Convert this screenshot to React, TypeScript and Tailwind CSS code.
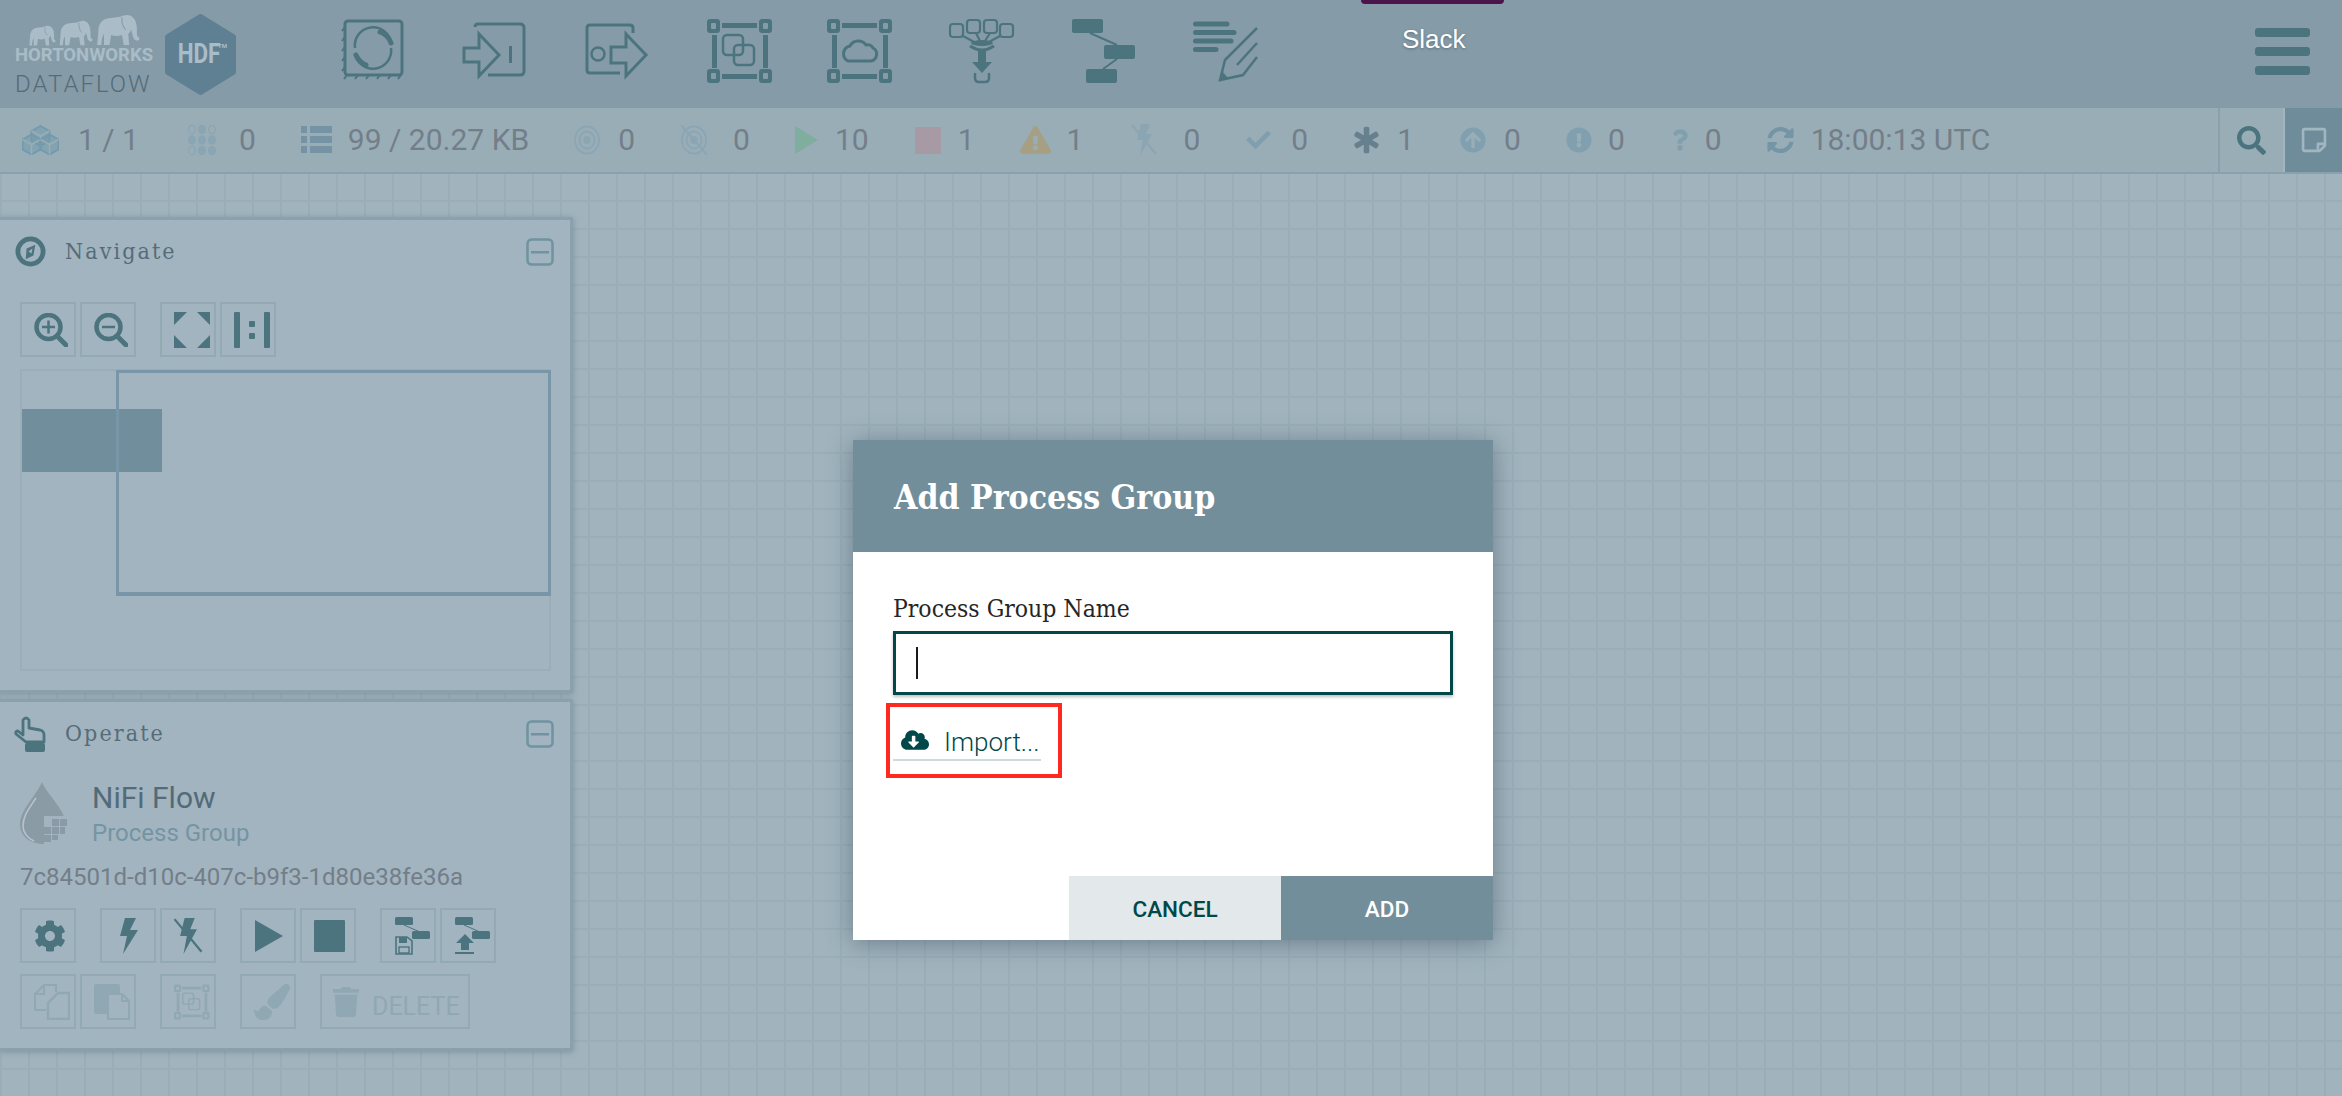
import React from "react";
import {
  FaCog, FaCheck, FaAsterisk, FaArrowCircleUp, FaExclamationCircle, FaQuestion, FaSyncAlt,
  FaExclamationTriangle, FaSearch, FaRegStickyNote, FaCloudDownloadAlt, FaPaintBrush, FaTrash,
} from "react-icons/fa";

const T = "#4c747f";
const HB = "#859ca8";

function Frame({ inner, vb = "0 0 66 64", color = T, hole = HB, cls = "w-[66px] h-[64px] overflow-visible" }: { inner: React.ReactNode; vb?: string; color?: string; hole?: string; cls?: string }) {
  const corner = (x: number, y: number, hx: number, hy: number, key: string) => (
    <g key={key}>
      <rect x={x} y={y} width="13" height="14" rx="3" fill={color} />
      <rect x={hx} y={hy} width="5" height="6" rx="1" fill={hole} />
    </g>
  );
  return (
    <svg viewBox={vb} className={cls}>
      {corner(0, 0, 4, 4, "a")}
      {corner(52, 0, 56, 4, "b")}
      {corner(0, 50, 4, 54, "c")}
      {corner(52, 50, 56, 54, "d")}
      <rect x="15" y="4" width="35" height="5" fill={color} />
      <rect x="15" y="55" width="35" height="5" fill={color} />
      <rect x="5" y="16" width="5" height="33" fill={color} />
      <rect x="56" y="16" width="5" height="33" fill={color} />
      {inner}
    </svg>
  );
}

const PgInner = ({ color = T }: { color?: string }) => (
  <g fill="none" stroke={color} strokeWidth="2.5">
    <rect x="16" y="16" width="20" height="20" rx="4" />
    <rect x="27" y="26" width="20" height="20" rx="4" />
  </g>
);

function HeaderIcons() {
  const s = "w-[64px] h-[64px] overflow-visible";
  return (
    <div className="flex gap-[58px] ml-[105px] pt-[19px]">
      <svg viewBox="0 0 64 64" className={s}>
        <rect x="4" y="2" width="57" height="54" rx="3" fill="none" stroke={T} strokeWidth="3" />
        <g stroke={T} strokeWidth="2" fill="none">
          {[8, 18, 28, 38, 48].map((y) => <path key={y} d={`M4 ${y}l-3 4`} />)}
          {[6, 17, 28, 39, 50, 60].map((x) => <path key={x} d={`M${x} 56l-3 4`} />)}
        </g>
        <path d="M14 29A18 18 0 0 1 50 24" fill="none" stroke={T} strokeWidth="2.5" />
        <path d="M50 29A18 18 0 0 1 14 34" fill="none" stroke={T} strokeWidth="2.5" />
        <path d="M39 13A18 18 0 0 1 50 24" fill="none" stroke={T} strokeWidth="5" strokeLinecap="round" />
        <path d="M25 46A18 18 0 0 1 15 36" fill="none" stroke={T} strokeWidth="5" strokeLinecap="round" />
      </svg>
      <svg viewBox="0 0 64 64" className={s}>
        <path d="M12 8Q12 5 15 5H57Q61 5 61 9V52Q61 56 57 56H25" fill="none" stroke={T} strokeWidth="3" />
        <path d="M1 29H16V15L36 36L16 57V43H1Z" fill={HB} stroke={T} strokeWidth="3" />
        <rect x="46" y="27" width="3" height="17" fill={T} />
      </svg>
      <svg viewBox="0 0 64 64" className={s}>
        <path d="M48 14V9Q48 6 45 6H5Q2 6 2 9V51Q2 54 5 54H35" fill="none" stroke={T} strokeWidth="3" />
        <circle cx="13" cy="35" r="6.5" fill="none" stroke={T} strokeWidth="2.5" />
        <path d="M26 28H41V15L61 36L41 57V44H26Z" fill={HB} stroke={T} strokeWidth="3" />
      </svg>
      <Frame vb="0 0 64 64" cls={s} inner={<PgInner />} />
      <Frame vb="2 0 64 64" cls={s} inner={
        <path d="M21 42H44A7 7 0 0 0 46 29A6 6 0 0 0 39 26A9.5 9.5 0 0 0 23 27A8 8 0 0 0 21 42Z" fill="none" stroke={T} strokeWidth="3" strokeLinejoin="round" />
      } />
      <svg viewBox="2 0 64 64" className={s}>
        <g fill="none" stroke={T} strokeWidth="2.2">
          <rect x="1" y="5" width="13" height="13" rx="3" />
          <rect x="18" y="1" width="13" height="13" rx="3" />
          <rect x="35" y="1" width="13" height="13" rx="3" />
          <rect x="51" y="5" width="13" height="13" rx="3" />
          <path d="M14 17L27 24M27 14L31 22M41 14L36 22M51 17L38 24" />
          <path d="M21 27Q33 35 45 27" strokeWidth="3" />
          <path d="M26 54V59Q26 63 30 63H36Q40 63 40 59V54" strokeWidth="2.5" />
        </g>
        <ellipse cx="33" cy="24" rx="11" ry="3" fill={T} />
        <rect x="29" y="30" width="8" height="14" fill={T} />
        <path d="M23 43H43L33 54Z" fill={T} />
      </svg>
      <svg viewBox="1 0 64 64" className={s}>
        <rect x="0" y="0" width="31" height="14" rx="2" fill={T} />
        <rect x="32" y="26" width="31" height="14" rx="2" fill={T} />
        <rect x="14" y="50" width="31" height="14" rx="2" fill={T} />
        <path d="M18 14L45 26M45 40L31 50" stroke={T} strokeWidth="2" />
      </svg>
      <svg viewBox="2 0 64 64" className={s}>
        <g stroke={T} strokeWidth="5" strokeLinecap="round">
          <path d="M2.5 5H34M2.5 13.5H41M2.5 22H38M2.5 30.5H23" />
        </g>
        <path d="M64 9L32 41L27 61L50 56L64 38M64 24L44 46" fill="none" stroke={T} strokeWidth="2.5" />
        <path d="M27 61L29 52L35 59Z" fill={T} />
      </svg>
    </div>
  );
}

function Elephant({ cls, fill = "#a9bcc7", ear = "#859ca8" }: { cls: string; fill?: string; ear?: string }) {
  return (
    <svg viewBox="0 0 100 70" preserveAspectRatio="none" className={cls}>
      <path d="M5 68L8 30Q12 8 40 8Q55 7 62 4Q78 -2 88 12Q94 22 93 40Q93 52 99 52Q99 59 92 58Q84 56 83 44L80 34Q78 42 74 44L76 68H64L60 46Q48 50 36 46L32 68H20L20 44Q15 50 14 68Z" fill={fill} />
      <path d="M60 8Q58 24 68 34" fill="none" stroke={ear} strokeWidth="2.5" />
    </svg>
  );
}

function Logo() {
  return (
    <div className="flex pl-[15px] pt-[14px] w-[236px] shrink-0">
      <div className="w-[135px] flex flex-col">
        <div className="flex items-end h-[32px] pl-[13px] gap-[2px]">
          <Elephant cls="w-[28px] h-[21px]" />
          <Elephant cls="w-[35px] h-[26px]" />
          <Elephant cls="w-[45px] h-[32px]" />
        </div>
        <div className="mt-[1px] h-[16px] leading-[16px] text-[18.5px] font-bold text-[#a9bcc7] font-['Roboto',sans-serif] whitespace-nowrap">HORTONWORKS</div>
        <div className="mt-[9px] h-[24px] leading-[24px] text-[24px] font-light text-[#566b77] font-['Roboto',sans-serif] tracking-[2px] whitespace-nowrap">DATAFLOW</div>
      </div>
      <div className="relative ml-[15px] w-[71px] h-[81px] flex items-center justify-center">
        <svg viewBox="0 0 71 81" className="absolute inset-0 w-[71px] h-[81px]">
          <path d="M35.5 3L68 23V58L35.5 78L3 58V23Z" fill="#5f8093" stroke="#5f8093" strokeWidth="6" strokeLinejoin="round" />
        </svg>
        <span className="relative inline-block scale-x-[0.83] text-[27px] font-bold text-[#a9bdc9] font-['Roboto',sans-serif] pr-[4px]">HDF</span>
        <span className="absolute right-[9px] top-[29px] text-[6px] leading-none font-bold text-[#a9bdc9] font-['Roboto',sans-serif]">TM</span>
      </div>
    </div>
  );
}

function Header() {
  return (
    <header className="relative h-[108px] shrink-0 bg-[#859ca8] flex">
      <Logo />
      <HeaderIcons />
      <div className="absolute left-[1361px] top-0 w-[143px] h-[4px] rounded-b-[10px] bg-[#4a154b]" />
      <div className="absolute left-[1402px] top-[23px] text-[26px] leading-[32px] text-white font-['Liberation_Sans',sans-serif] [text-shadow:0_1px_3px_rgba(0,0,0,0.3)]">Slack</div>
      <div className="absolute left-[2255px] top-[28px] flex flex-col gap-[10px]">
        <div className="w-[55px] h-[9px] rounded-[3px] bg-[#4c747f]" />
        <div className="w-[55px] h-[9px] rounded-[3px] bg-[#4c747f]" />
        <div className="w-[55px] h-[9px] rounded-[3px] bg-[#4c747f]" />
      </div>
    </header>
  );
}

function Num({ children, cls }: { children: React.ReactNode; cls: string }) {
  return <span className={`${cls} text-[30px] leading-[64px] text-[#747e89] font-['Roboto',sans-serif] whitespace-nowrap`}>{children}</span>;
}

function Cubes() {
  const c = "#729aad";
  const cube = (x: number, y: number) => (
    <g transform={`translate(${x} ${y})`} fill="none" stroke={c} strokeWidth="2" strokeLinejoin="round">
      <path d="M9 0L18 5V15L9 20L0 15V5Z" fill={c} fillOpacity="0.55" />
      <path d="M0 5L9 10L18 5M9 10V20" stroke="#99adb7" strokeWidth="1.5" />
    </g>
  );
  return (
    <svg viewBox="0 0 37 30" className="w-[37px] h-[30px]">
      {cube(9.5, 1)}{cube(0.5, 9.5)}{cube(18.5, 9.5)}
    </svg>
  );
}

function GridDots() {
  const pts: [number, number, boolean][] = [];
  for (let r = 0; r < 3; r++) for (let c = 0; c < 3; c++) pts.push([5 + c * 10, 5.5 + r * 10.5, r === 1 || (r === 2 && c > 0) || (r === 0 && c === 1)]);
  return (
    <svg viewBox="0 0 30 32" className="w-[30px] h-[32px]">
      {pts.map(([x, y, f], i) => (
        <ellipse key={i} cx={x} cy={y} rx="3.4" ry="4.2" fill={f ? "#8aa5b3" : "none"} stroke="#8aa5b3" strokeWidth="1.2" />
      ))}
    </svg>
  );
}

function ListIc() {
  const c = "#7593a4";
  return (
    <svg viewBox="0 0 31 28" className="w-[31px] h-[28px]">
      {[0, 10, 20].map((y) => (
        <g key={y} fill={c}>
          <rect x="0" y={y} width="6" height="7" />
          <rect x="9" y={y} width="22" height="7" />
        </g>
      ))}
    </svg>
  );
}

function Target({ slash }: { slash?: boolean }) {
  const c = "#8aa6b4";
  return (
    <svg viewBox="0 0 30 30" className="w-[30px] h-[30px]">
      <g fill="none" stroke={c} strokeWidth="1.8">
        <ellipse cx="15" cy="15" rx="12" ry="13.5" />
        <ellipse cx="15" cy="15" rx="7.5" ry="8.5" />
      </g>
      <ellipse cx="15" cy="15" rx="3.5" ry="4" fill={c} />
      {slash && <path d="M2 0L28 30" stroke={c} strokeWidth="2" />}
    </svg>
  );
}

function BoltSlash({ c, cls }: { c: string; cls: string }) {
  return (
    <svg viewBox="0 0 28 32" className={cls}>
      <path d="M11 0H20L16 10H22L10 32L13 16H7Z" fill={c} />
      <path d="M2 1L26 30" stroke={c} strokeWidth="2" />
    </svg>
  );
}

function StatusBar() {
  return (
    <div className="h-[64px] shrink-0 bg-[#99adb7] flex items-center pl-[22px]">
      <Cubes /><Num cls="ml-[19px]">1 / 1</Num>
      <div className="ml-[48px] flex"><GridDots /></div><Num cls="ml-[22px]">0</Num>
      <div className="ml-[45px] flex"><ListIc /></div><Num cls="ml-[16px]">99 / 20.27 KB</Num>
      <div className="ml-[43px] flex"><Target /></div><Num cls="ml-[16px]">0</Num>
      <div className="ml-[44px] flex"><Target slash /></div><Num cls="ml-[24px]">0</Num>
      <div className="ml-[45px] w-0 h-0 border-y-[14px] border-y-transparent border-l-[23px] border-l-[#7fae9f]" /><Num cls="ml-[17px]">10</Num>
      <div className="ml-[46px] w-[26px] h-[27px] rounded-[1px] bg-[#a89aa4]" /><Num cls="ml-[17px]">1</Num>
      <FaExclamationTriangle className="ml-[45px] w-[31px] h-[28px] text-[#a79f83]" /><Num cls="ml-[16px]">1</Num>
      <div className="ml-[47px] flex"><BoltSlash c="#8ba5b3" cls="w-[28px] h-[32px]" /></div><Num cls="ml-[25px]">0</Num>
      <FaCheck className="ml-[45px] w-[27px] h-[24px] text-[#7f9fae]" /><Num cls="ml-[19px]">0</Num>
      <FaAsterisk className="ml-[46px] w-[25px] h-[28px] text-[#66808e] stroke-[#66808e] stroke-[30]" /><Num cls="ml-[18px]">1</Num>
      <FaArrowCircleUp className="ml-[46px] w-[26px] h-[28px] text-[#80a0b0]" /><Num cls="ml-[18px]">0</Num>
      <FaExclamationCircle className="ml-[45px] w-[26px] h-[28px] text-[#80a0b0]" /><Num cls="ml-[16px]">0</Num>
      <FaQuestion className="ml-[47px] w-[16px] h-[24px] text-[#80a0b0]" /><Num cls="ml-[17px]">0</Num>
      <FaSyncAlt className="ml-[45px] w-[27px] h-[28px] text-[#7495a6]" /><Num cls="ml-[17px]">18:00:13 UTC</Num>
      <div className="ml-auto h-full w-[65px] border-l-2 border-[#8aa0ae] flex items-center justify-center">
        <FaSearch className="w-[29px] h-[29px] text-[#4c747f]" />
      </div>
      <div className="h-full w-[59px] border-l-2 border-[#a2b4bf] bg-[#6f8c9a] flex items-center justify-center">
        <FaRegStickyNote className="w-[26px] h-[28px] text-[#a2b6c1]" />
      </div>
    </div>
  );
}

function Btn({ children, cls = "w-[56px]" }: { children?: React.ReactNode; cls?: string }) {
  return <div className={`${cls} h-[55px] border-2 border-[#93aab5] flex items-center justify-center shrink-0`}>{children}</div>;
}

function Collapse() {
  return (
    <svg viewBox="0 0 28 28" className="w-[28px] h-[28px]">
      <rect x="1.5" y="1.5" width="25" height="25" rx="4" fill="none" stroke="#6f93a2" strokeWidth="2.5" />
      <rect x="5" y="13" width="18" height="2.5" fill="#6f93a2" />
    </svg>
  );
}

function Mag({ plus }: { plus?: boolean }) {
  return (
    <svg viewBox="0 0 34 34" className="ml-[5px] w-[34px] h-[34px]">
      <circle cx="14.5" cy="14" r="12" fill="none" stroke={T} strokeWidth="4.5" />
      <path d="M23 23L32 32" stroke={T} strokeWidth="5" strokeLinecap="round" />
      <path d={plus ? "M8 14H21M14.5 7.5V20.5" : "M8 14H21"} stroke={T} strokeWidth="2.5" />
    </svg>
  );
}

function TemplateMini({ children }: { children: React.ReactNode }) {
  return (
    <svg viewBox="0 0 40 38" className="ml-[7px] w-[40px] h-[38px]">
      <rect x="3" y="0" width="18" height="8" rx="1.5" fill={T} />
      <rect x="20" y="14" width="18" height="8" rx="1.5" fill={T} />
      <path d="M12 8L28 15" stroke={T} strokeWidth="1" />
      {children}
    </svg>
  );
}

function Panel({ title, icon, cls, children }: { title: string; icon: React.ReactNode; cls: string; children: React.ReactNode }) {
  return (
    <section className={`${cls} w-[573px] bg-[#a2b4bf] border-y-[3px] border-r-[3px] border-[#8aa1ad] shadow-[0_1px_6px_rgba(60,80,95,0.35)] flex flex-col`}>
      <div className="h-[63px] shrink-0 flex items-center pl-[14px] pr-[16px]">
        <div className="w-[32px] h-[36px] flex items-center justify-center">{icon}</div>
        <span className="ml-[19px] text-[23px] tracking-[2.1px] text-[#566c78] font-['DejaVu_Serif_Condensed','DejaVu_Serif',serif]">{title}</span>
        <div className="ml-auto flex"><Collapse /></div>
      </div>
      {children}
    </section>
  );
}

function Navigate() {
  return (
    <Panel title="Navigate" cls="h-[476px] mt-[43px]" icon={
      <svg viewBox="0 0 32 32" className="w-[31px] h-[31px]">
        <circle cx="16" cy="16" r="13" fill="none" stroke={T} strokeWidth="5" />
        <path d="M21 9L19 20L11 24L12 13Z" fill={T} />
        <path d="M14 16L18 13L17 18Z" fill="#a2b4bf" />
      </svg>
    }>
      <div className="flex pl-[20px] mt-[19px]">
        <Btn><Mag plus /></Btn>
        <div className="ml-[4px]"><Btn><Mag /></Btn></div>
        <div className="ml-[24px]">
          <Btn>
            <svg viewBox="0 0 36 36" className="ml-[8px] w-[36px] h-[36px]">
              <path d="M0 0H13L0 13ZM23 0H36V13ZM0 23L13 36H0ZM36 23V36H23Z" fill={T} />
            </svg>
          </Btn>
        </div>
        <div className="ml-[4px]">
          <Btn>
            <svg viewBox="0 0 36 36" className="ml-[8px] w-[36px] h-[36px]">
              <rect x="0" y="0" width="6" height="36" rx="1" fill={T} />
              <rect x="30" y="0" width="6" height="36" rx="1" fill={T} />
              <rect x="15" y="9" width="6" height="6" rx="1" fill={T} />
              <rect x="15" y="21" width="6" height="6" rx="1" fill={T} />
            </svg>
          </Btn>
        </div>
      </div>
      <div className="relative ml-[20px] mt-[12px] w-[531px] h-[302px] border-2 border-[#99aeb9]">
        <div className="absolute left-0 top-[38px] w-[140px] h-[63px] bg-[#718e9c]" />
        <div className="absolute left-[94px] top-[-1px] w-[435px] h-[226px] border-[3px] border-b-4 border-[#7896a8]" />
      </div>
    </Panel>
  );
}

function Operate() {
  const D = "#8fa8b3";
  return (
    <Panel title="Operate" cls="h-[352px] mt-[6px]" icon={
      <svg viewBox="0 0 32 36" className="w-[32px] h-[36px]">
        <path d="M9 4Q12 0 15 4V12L26 14Q30 15 30 19V26H12L2 18Q1 15 4 15L9 19Z" fill="none" stroke={T} strokeWidth="2.8" strokeLinejoin="round" />
        <rect x="11" y="27" width="20" height="9" rx="2" fill={T} />
      </svg>
    }>
      <div className="flex pl-[20px] mt-[17px] h-[66px]">
        <svg viewBox="0 0 47 64" className="w-[47px] h-[64px] shrink-0">
          <path d="M22 0C28 14 46 28 46 44C46 56 36 62 24 62C12 62 0 56 0 42C0 28 16 14 22 0Z" fill="#8b9ba5" />
          <path d="M16 16C8 28 3 34 3 44C3 50 7 56 14 59" fill="none" stroke="#b6c3cb" strokeWidth="1.6" />
          <path d="M24 34H48V64H24Z" fill="#a2b4bf" />
          <g fill="#8b9ba5">
            <rect x="32" y="37" width="7" height="7" /><rect x="40" y="37" width="7" height="7" />
            <rect x="24" y="45" width="7" height="7" /><rect x="32" y="45" width="7" height="7" /><rect x="40" y="45" width="5" height="7" />
            <rect x="24" y="53" width="7" height="7" /><rect x="32" y="53" width="6" height="5" />
          </g>
        </svg>
        <div className="ml-[25px] flex flex-col">
          <span className="text-[30px] leading-[32px] text-[#536b78] font-['Roboto',sans-serif]">NiFi Flow</span>
          <span className="text-[24px] leading-[30px] mt-[4px] text-[#7594a3] font-['Roboto',sans-serif]">Process Group</span>
        </div>
      </div>
      <div className="pl-[20px] mt-[16px] text-[24px] leading-[26px] text-[#737e89] font-['Roboto',sans-serif] whitespace-nowrap">7c84501d-d10c-407c-b9f3-1d80e38fe36a</div>
      <div className="flex pl-[20px] mt-[18px]">
        <Btn><FaCog className="ml-[3px] w-[32px] h-[32px] text-[#4c747f]" /></Btn>
        <div className="ml-[24px]">
          <Btn>
            <svg viewBox="0 0 20 36" className="w-[20px] h-[36px]">
              <path d="M7 0H18L12 12H20L5 36L9 18H2Z" fill={T} />
            </svg>
          </Btn>
        </div>
        <div className="ml-[4px]"><Btn><BoltSlash c={T} cls="w-[32px] h-[36px]" /></Btn></div>
        <div className="ml-[24px]">
          <Btn><div className="ml-[2px] w-0 h-0 border-y-[16px] border-y-transparent border-l-[28px] border-l-[#4c747f]" /></Btn>
        </div>
        <div className="ml-[4px]"><Btn><div className="ml-[3px] w-[31px] h-[32px] rounded-[1px] bg-[#4c747f]" /></Btn></div>
        <div className="ml-[24px]">
          <Btn>
            <TemplateMini>
              <path d="M4 20H15L20 24V37H4Z" fill="none" stroke={T} strokeWidth="1.6" />
              <rect x="7" y="20" width="8" height="6" fill={T} />
              <rect x="7" y="30" width="10" height="6" fill="none" stroke={T} strokeWidth="1.4" />
            </TemplateMini>
          </Btn>
        </div>
        <div className="ml-[4px]">
          <Btn>
            <TemplateMini>
              <path d="M13 17L22 26H17V33H9V26H4Z" fill={T} />
              <rect x="3" y="35" width="19" height="2" fill={T} />
            </TemplateMini>
          </Btn>
        </div>
      </div>
      <div className="flex pl-[20px] mt-[11px]">
        <Btn>
          <svg viewBox="0 0 36 36" className="ml-[8px] w-[36px] h-[36px]">
            <path d="M22 8V1H10L1 10V26H12M10 1V10H1" fill="none" stroke={D} strokeWidth="2" />
            <path d="M24 9H35V35H14V19Z" fill="none" stroke={D} strokeWidth="2.4" />
          </svg>
        </Btn>
        <div className="ml-[4px]">
          <Btn>
            <svg viewBox="0 0 36 36" className="ml-[8px] w-[36px] h-[36px]">
              <rect x="0" y="0" width="26" height="30" rx="2" fill={D} />
              <path d="M14 10H28L35 17V35H14Z" fill="#a2b4bf" stroke={D} strokeWidth="2" />
              <path d="M28 10V17H35" fill="none" stroke={D} strokeWidth="2" />
            </svg>
          </Btn>
        </div>
        <div className="ml-[24px]">
          <Btn><Frame color={D} hole="#a2b4bf" vb="0 0 66 64" cls="ml-[8px] w-[36px] h-[36px]" inner={<PgInner color={D} />} /></Btn>
        </div>
        <div className="ml-[24px]"><Btn><FaPaintBrush className="ml-[8px] w-[36px] h-[36px] text-[#8fa8b3]" /></Btn></div>
        <div className="ml-[24px]">
          <Btn cls="w-[150px] justify-start">
            <FaTrash className="ml-[10px] w-[28px] h-[30px] text-[#8fa8b3]" />
            <span className="ml-[12px] mt-[10px] text-[25px] leading-[30px] text-[#8fa8b3] font-['Roboto',sans-serif]">DELETE</span>
          </Btn>
        </div>
      </div>
    </Panel>
  );
}

function Dialog() {
  return (
    <div className="absolute left-[853px] top-[266px] w-[640px] h-[500px] bg-white flex flex-col shadow-[0_3px_24px_rgba(40,60,75,0.45)]">
      <div className="h-[112px] shrink-0 bg-[#728e9b] flex items-center pl-[41px] pt-[5px]">
        <h1 className="text-[33.5px] font-bold text-white font-['DejaVu_Serif_Condensed','DejaVu_Serif',serif]">Add Process Group</h1>
      </div>
      <div className="flex-1 px-[40px] pt-[43px] flex flex-col items-start">
        <label className="text-[24.5px] leading-[28px] text-[#262626] font-['DejaVu_Serif_Condensed','DejaVu_Serif',serif]">Process Group Name</label>
        <div className="mt-[8px] w-[560px] h-[64px] border-[3px] border-[#004849] shadow-[0_2px_3px_rgba(0,0,0,0.25)] flex items-center pl-[20px]">
          <div className="w-[2px] h-[32px] bg-[#1a1a1a]" />
        </div>
        <div className="mt-[8px] -ml-[7px] w-[176px] h-[75px] border-[4px] border-[#ff2a1f] pl-[3px] pt-[14px]">
          <div className="w-[148px] h-[40px] border-b-2 border-[#cfdadd] flex items-center pl-[8px] gap-[15px]">
            <FaCloudDownloadAlt className="w-[28px] h-[24px] text-[#004849]" />
            <span className="pt-[4px] text-[26px] font-light text-[#004849] font-['Roboto',sans-serif] whitespace-nowrap">Import...</span>
          </div>
        </div>
      </div>
      <div className="h-[64px] shrink-0 flex justify-end">
        <div className="w-[212px] pt-[3px] bg-[#e3e8eb] flex items-center justify-center text-[22.5px] font-medium text-[#004849] font-['Roboto',sans-serif]">CANCEL</div>
        <div className="w-[212px] pt-[3px] bg-[#728e9b] flex items-center justify-center text-[22.5px] font-medium text-white font-['Roboto',sans-serif]">ADD</div>
      </div>
    </div>
  );
}

export default function App() {
  return (
    <div className="w-[2342px] h-[1096px] overflow-hidden flex flex-col bg-[#a1b4be]">
      <Header />
      <StatusBar />
      <main className="relative flex-1 flex flex-col items-start border-t-2 border-[#8aa0ae] bg-[linear-gradient(#9aaeb8_2px,transparent_2px),linear-gradient(90deg,#9aaeb8_2px,transparent_2px)] bg-[size:28px_28px] bg-[position:0px_-2px]">
        <Navigate />
        <Operate />
        <Dialog />
      </main>
    </div>
  );
}
